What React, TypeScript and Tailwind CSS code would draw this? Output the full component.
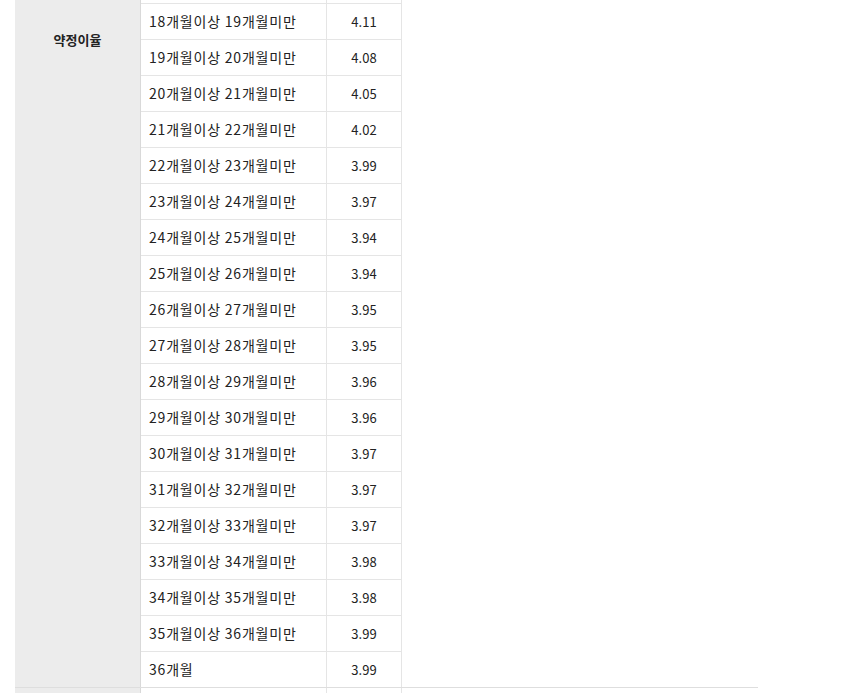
const rates: [string, string][] = [
  ['18개월이상 19개월미만', '4.11'],
  ['19개월이상 20개월미만', '4.08'],
  ['20개월이상 21개월미만', '4.05'],
  ['21개월이상 22개월미만', '4.02'],
  ['22개월이상 23개월미만', '3.99'],
  ['23개월이상 24개월미만', '3.97'],
  ['24개월이상 25개월미만', '3.94'],
  ['25개월이상 26개월미만', '3.94'],
  ['26개월이상 27개월미만', '3.95'],
  ['27개월이상 28개월미만', '3.95'],
  ['28개월이상 29개월미만', '3.96'],
  ['29개월이상 30개월미만', '3.96'],
  ['30개월이상 31개월미만', '3.97'],
  ['31개월이상 32개월미만', '3.97'],
  ['32개월이상 33개월미만', '3.97'],
  ['33개월이상 34개월미만', '3.98'],
  ['34개월이상 35개월미만', '3.98'],
  ['35개월이상 36개월미만', '3.99'],
  ['36개월', '3.99'],
];

const font = { fontFamily: '"Noto Sans CJK KR", "Noto Sans", sans-serif' };

function RateRow({ term, rate, last }: { term: string; rate: string; last?: boolean }) {
  return (
    <div className={last ? 'flex h-[35px]' : 'flex h-9 border-b border-[#e5e5e5]'}>
      <div className="w-[186px] flex items-center pl-2 border-r border-[#e5e5e5] text-[14px] tracking-[0.8px] text-[#222]">
        {term}
      </div>
      <div className="w-[75px] flex items-center justify-center border-r border-[#e5e5e5] text-[13px] text-[#222]">
        {rate}
      </div>
    </div>
  );
}

export default function App() {
  return (
    <div className="w-[866px] h-[693px] overflow-hidden bg-white" style={font}>
      <div className="ml-[15px] w-[743px]">
        {/* 약정이율 section */}
        <div className="flex border-b border-[#dedede]">
          <div className="w-[126px] bg-[#ececec] border-r border-[#d9d9d9] flex justify-center pt-[30px]">
            <span className="text-[13px] font-bold text-[#222] leading-5">약정이율</span>
          </div>
          <div className="w-[261px]">
            {/* tail of previous row */}
            <div className="flex h-[4px] border-b border-[#e5e5e5]">
              <div className="w-[186px] border-r border-[#e5e5e5]" />
              <div className="w-[75px] border-r border-[#e5e5e5]" />
            </div>
            {rates.map(([term, rate], i) => (
              <RateRow key={term} term={term} rate={rate} last={i === rates.length - 1} />
            ))}
          </div>
        </div>
        {/* next section */}
        <div className="flex h-10">
          <div className="w-[126px] bg-[#ececec] border-r border-[#d9d9d9]" />
          <div className="w-[186px] border-r border-[#e5e5e5]" />
          <div className="w-[75px] border-r border-[#e5e5e5]" />
        </div>
      </div>
    </div>
  );
}
